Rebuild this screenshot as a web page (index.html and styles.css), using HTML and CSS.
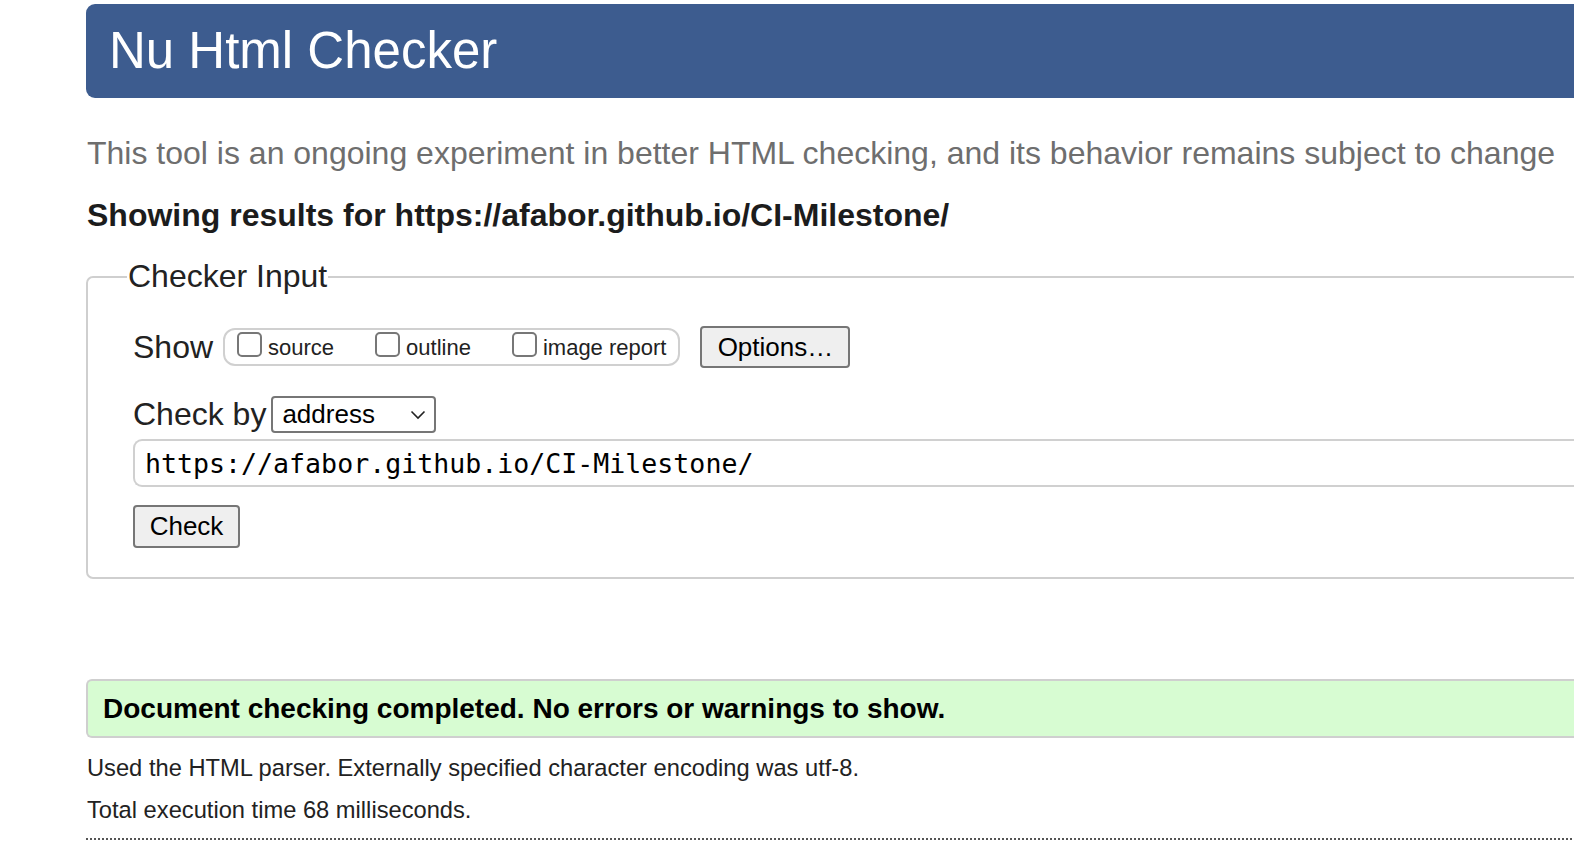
FILE: index.html
```html
<!DOCTYPE html>
<html lang="en">
<head>
<meta charset="utf-8">
<title>Nu Html Checker</title>
<link rel="stylesheet" href="styles.css">
</head>
<body>
<div class="page">
  <h1 class="banner">Nu Html Checker</h1>
  <p class="tagline">This tool is an ongoing experiment in better HTML checking, and its behavior remains subject to change</p>
  <p class="results-for">Showing results for https://afabor.github.io/CI-Milestone/</p>
  <fieldset class="checker">
    <legend class="checker-legend">Checker Input</legend>
    <div class="show-row">
      <span class="row-label">Show</span>
      <div class="show-group">
        <label class="opt"><span class="box"></span>source</label>
        <label class="opt"><span class="box"></span>outline</label>
        <label class="opt"><span class="box"></span>image report</label>
      </div>
      <span class="btn btn-options">Options…</span>
    </div>
    <div class="by-row">
      <span class="row-label">Check by</span>
      <span class="select">address
        <svg class="chev" width="16" height="10" viewBox="0 0 16 10"><path d="M1.5 1.5 L8 8 L14.5 1.5" fill="none" stroke="#222" stroke-width="1.6"/></svg>
      </span>
    </div>
    <div class="url">https://afabor.github.io/CI-Milestone/</div>
    <div class="check-row"><span class="btn btn-check">Check</span></div>
  </fieldset>
  <div class="success">Document checking completed. No errors or warnings to show.</div>
  <p class="info">Used the HTML parser. Externally specified character encoding was utf-8.</p>
  <p class="info">Total execution time 68 milliseconds.</p>
  <div class="dots"></div>
</div>
</body>
</html>
```

FILE: styles.css
```css
html, body {
  margin: 0;
  padding: 0;
  overflow: hidden;
  background: #fff;
}
body {
  font-family: "Liberation Sans", Arial, sans-serif;
  color: #222;
}
.page {
  width: 1700px;
  padding: 4px 0 0 86px;
  box-sizing: border-box;
}
.banner {
  margin: 0;
  height: 94px;
  box-sizing: border-box;
  background: #3d5c8f;
  color: #fff;
  font-weight: normal;
  font-size: 51px;
  line-height: 94px;
  padding-left: 23px;
  border-radius: 9px 0 0 9px;
}
.tagline {
  margin: 38px 0 0 1px;
  font-size: 32px;
  line-height: 34px;
  color: #6e6e6e;
}
.results-for {
  margin: 28px 0 0 1px;
  font-size: 32px;
  line-height: 34px;
  font-weight: bold;
  color: #1c1c1c;
}
.checker {
  margin: 26px 0 0 0;
  border: 2px solid #cfcfcf;
  border-radius: 7px 0 0 7px;
  padding: 31px 0 29px 45px;
  min-width: 0;
}
.checker-legend {
  font-size: 32px;
  padding: 0 1px;
  margin-left: -6px;
  color: #222;
}
.show-row {
  display: flex;
  align-items: center;
  height: 42px;
}
.row-label {
  font-size: 32px;
  color: #222;
}
.show-group {
  margin-left: 10px;
  display: flex;
  align-items: center;
  height: 38px;
  box-sizing: border-box;
  border: 2px solid #d0d0d0;
  border-radius: 12px;
  padding: 0 12px 0 12px;
}
.opt {
  display: flex;
  align-items: center;
  font-size: 22px;
  color: #222;
  margin-right: 41px;
  position: relative;
  top: 1px;
}
.opt:last-child { margin-right: 0; }
.box {
  width: 25px;
  height: 25px;
  border: 2px solid #777;
  border-radius: 5px;
  margin-right: 6px;
  position: relative;
  top: -4px;
  box-sizing: border-box;
  background: #fff;
}
.btn {
  display: inline-flex;
  align-items: center;
  justify-content: center;
  background: #efefef;
  border: 2px solid #767676;
  border-radius: 4px;
  color: #000;
  box-sizing: border-box;
}
.btn-options {
  margin-left: 20px;
  width: 150px;
  height: 42px;
  font-size: 26px;
}
.by-row {
  display: flex;
  align-items: center;
  margin-top: 27px;
  height: 38px;
}
.select {
  margin-left: 5px;
  width: 165px;
  height: 37px;
  box-sizing: border-box;
  border: 2px solid #767676;
  border-radius: 4px;
  font-size: 26px;
  padding-left: 9px;
  display: flex;
  align-items: center;
  justify-content: space-between;
  padding-right: 8px;
  color: #000;
}
.chev { margin-top: 2px; }
.url {
  margin-top: 6px;
  height: 48px;
  box-sizing: border-box;
  border: 2px solid #d0d0d0;
  border-right: none;
  border-radius: 9px 0 0 9px;
  font-family: "DejaVu Sans Mono", "Liberation Mono", monospace;
  font-size: 26.6px;
  padding-left: 10px;
  display: flex;
  align-items: center;
  color: #000;
}
.check-row {
  margin-top: 18px;
  display: flex;
}
.btn-check {
  width: 107px;
  height: 43px;
  font-size: 26px;
}
.success {
  margin-top: 100px;
  height: 59px;
  box-sizing: border-box;
  background: #d7fcd2;
  border: 2px solid #cfcfcf;
  border-right: none;
  border-radius: 6px 0 0 6px;
  font-size: 28px;
  font-weight: bold;
  color: #000;
  padding-left: 15px;
  display: flex;
  align-items: center;
}
.info {
  margin: 16px 0 0 1px;
  font-size: 23.7px;
  line-height: 28px;
  color: #222;
}
.info + .info { margin-top: 14px; }
.dots {
  margin-top: 14px;
  border-top: 2px dotted #555;
}
```
